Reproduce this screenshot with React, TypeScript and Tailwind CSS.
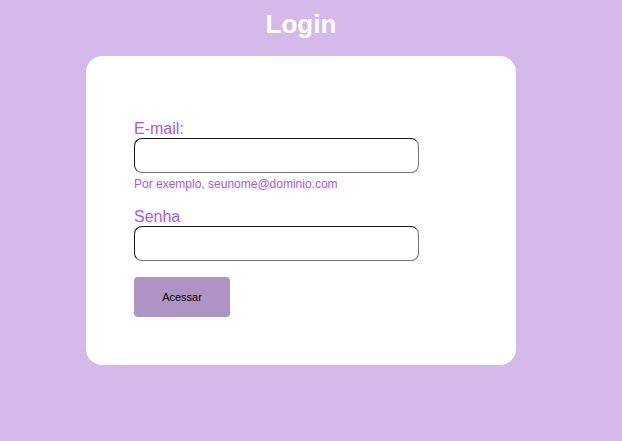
export default function App() {
  return (
    <main className="flex min-h-screen flex-col bg-[#d4b9eb] pt-2 font-['Liberation_Sans',Arial,sans-serif]">
      <div className="w-full pr-5">
        <h1 className="text-center text-[26px] leading-8 font-bold text-white">Login</h1>
        <form className="mx-auto mt-4 flex w-5/7 flex-col items-start rounded-2xl bg-white px-12 pt-16 pb-12">
          <label htmlFor="email" className="text-base leading-[18px] text-[#a855f7]">E-mail:</label>
          <input id="email" type="email" aria-describedby="email-hint" className="h-[35px] w-[285px] max-w-full rounded-lg border border-[#767676] border-t-[#1a1a1a] border-l-[#1a1a1a] bg-white px-2 text-sm" />
          <p id="email-hint" className="mt-[3px] text-xs leading-4 text-[#a855f7]">Por exemplo, seunome@dominio.com</p>
          <label htmlFor="senha" className="mt-4 text-base leading-[18px] text-[#a855f7]">Senha</label>
          <input id="senha" type="password" className="h-[35px] w-[285px] max-w-full rounded-lg border border-[#767676] border-t-[#1a1a1a] border-l-[#1a1a1a] bg-white px-2 text-sm" />
          <button type="submit" className="mt-4 h-10 w-24 rounded bg-[#ae94c5] text-[11px] text-black">Acessar</button>
        </form>
      </div>
    </main>
  );
}
